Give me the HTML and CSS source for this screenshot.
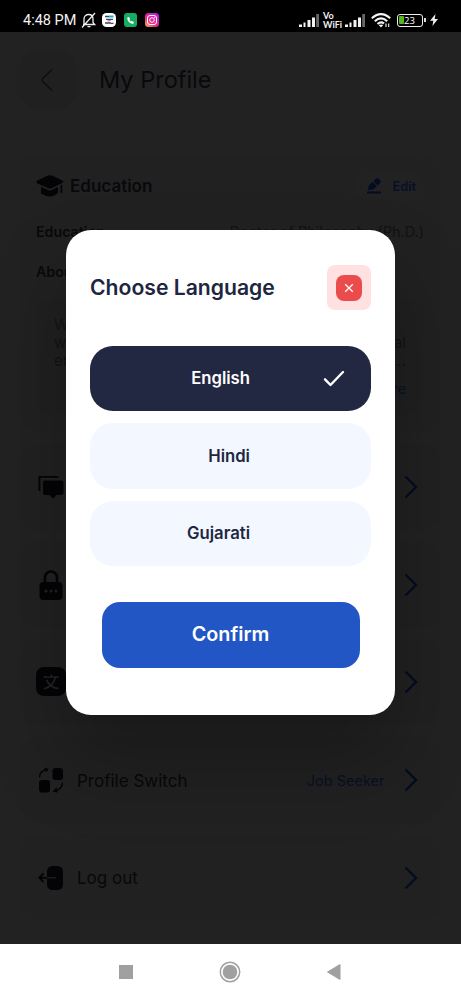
FILE: index.html
```html
<!DOCTYPE html>
<html lang="en">
<head>
<meta charset="utf-8">
<title>My Profile</title>
<link rel="stylesheet" href="styles.css">
</head>
<body>
<div class="phone">
  <header class="status">
    <span class="clock">4:48 PM</span>
    <svg class="bell" width="16" height="17" viewBox="0 0 16 17" fill="none" stroke="#eee" stroke-width="1.3"><path d="M3 12.5V7C3 4 5 2.5 7.700 2.500S12 4 12 7v3.500l1.700 2H2M6.500 14.700h3M1 15.500 14 1"/></svg>
    <svg class="app" width="14" height="14" viewBox="0 0 14 14"><rect width="14" height="14" rx="4.500" fill="#fff"/><path d="M3 3.500h4M4 6.300h7M3 10h6" stroke="#334869" stroke-width="1.300"/><path d="M7 3.500h4.500" stroke="#23a7df" stroke-width="2"/><path d="M5.500 8 8.500 7.500" stroke="#d44" stroke-width="1"/><path d="M9 10.300h2.500" stroke="#222"/></svg>
    <svg class="app" width="13" height="14" viewBox="0 0 13 14"><rect width="13" height="14" rx="3" fill="#15ad62"/><path d="M3.300 4.500 5 4l1 2-.7.900 1.600 1.700 1-.6 2 1-.5 1.800C6.500 11.200 3 8 3.300 4.500Z" fill="#fff"/></svg>
    <svg class="app" width="14" height="14" viewBox="0 0 14 14"><defs><linearGradient id="ig" x1="0" y1="1" x2=".8" y2="0"><stop offset="0" stop-color="#ffc145"/><stop offset=".4" stop-color="#f0287c"/><stop offset="1" stop-color="#b51de0"/></linearGradient></defs><rect width="14" height="14" rx="3.500" fill="url(#ig)"/><g fill="none" stroke="#fff" stroke-width="1"><rect x="2.500" y="2.500" width="9" height="9" rx="2.500"/><circle cx="7" cy="7" r="2.300"/></g><circle cx="9.700" cy="4.300" r=".6" fill="#fff"/></svg>
    <span class="grow"></span>
    <svg width="20" height="13" viewBox="0 0 20 13" fill="#f2f2f2"><path d="M0 10.500h3V13H0zM4.500 8.500h2V13h-2zM8.500 6h3v7h-3zM13 3.500h3V13h-3z"/><path d="M17.200 0H20v13h-2.800z" fill="#666"/></svg>
    <span class="vowifi"><span>Vo</span><span>WiFi</span></span>
    <svg class="sig2" width="20" height="13" viewBox="0 0 20 13" fill="#f2f2f2"><path d="M0 10.500h3V13H0zM4.500 8.500h2V13h-2zM8.500 6h3v7h-3zM13 3.500h3V13h-3z"/><path d="M17.200 0H20v13h-2.800z" fill="#666"/></svg>
    <svg class="wifi" width="20" height="15" viewBox="0 0 20 15" fill="none" stroke="#f5f5f5" stroke-width="2.100"><path d="M.8 5.200Q10-3 19.200 5.200M3.800 8.200Q10 2.700 16.200 8.200M6.500 11Q10 8 13 10.500"/><path d="m8.200 12 1.800 2.200L11.800 12Z" fill="#fff" stroke-width=".6"/><path d="M15 10.500v3.500M17.700 10.500V14" stroke-width="1.100"/></svg>
    <span class="battery"><span class="charge"></span><span class="pct">23</span></span><span class="cap"></span>
    <svg class="bolt" width="8" height="12" viewBox="0 0 8 12"><path d="M5.500 0 0 6.800h3.300L2.400 12 8 5H4.700Z" fill="#eee"/></svg>
  </header>

  <main class="page">
    <div class="topbar">
      <span class="back"><svg width="12" height="22" viewBox="0 0 12 22" fill="none" stroke="#0e0e10" stroke-width="1.500" stroke-linecap="round"><path d="M10.500 1 2 9.300Q.5 11 2 12.700L10.500 21"/></svg></span>
      <h1>My Profile</h1>
    </div>
    <div class="prev"></div>
    <section class="card education">
      <div class="cardhead">
        <svg width="28" height="22" viewBox="0 0 28 22" fill="#040407"><path d="M12 .5Q14 0 16 .5L26.500 5.500Q28 6.500 26.500 7.800L16 13Q14 14 12 13L1.500 8.500Q-.5 7 1.500 5.500ZM5 12l7.500 3.200q1.500.5 3 0L22 12v6Q18 21.500 14 21.500T5 18.500ZM24.500 10.500l1.700-.8V18h-1.700z"/></svg>
        <h2>Education</h2>
        <span class="edit"><svg width="14" height="16" viewBox="0 0 14 16" fill="#050b22"><path d="M0 13.600h14V15.500H0zM1 12l.8-4.500L5.700 4 10 8.200 6.200 11.500ZM6.500 3.200 8.500 1q1.900-1.600 4 .3t.3 4L10.800 7.500Z"/></svg>Edit</span>
      </div>
      <div class="field"><b>Education</b><span>Doctor of Philosophy (Ph.D.)</span></div>
      <div class="field about"><b>About</b></div>
      <div class="note">
        <div class="line"><span>W</span></div>
        <div class="line"><span>w</span><span>al</span></div>
        <div class="line"><span>en</span><span>...</span></div>
        <div class="more">More</div>
      </div>
    </section>
    <section class="card row">
      <svg class="ico" width="28" height="28" viewBox="0 0 28 28" fill="#040406"><path d="M1.500 3h20v1.800H3.400V18H1.500zM7 7.500h18l1.500 1.500v11.500L25 22h-5.500L16 25.500 12.500 22H7l-1-1.500V9z"/></svg>
      <svg class="chev" width="14" height="24" viewBox="0 0 14 24"><path d="m1.500 1.500 10.500 10.500-10.500 10.500"/></svg>
    </section>
    <section class="card row">
      <svg class="ico" width="28" height="32" viewBox="0 0 28 32"><path d="M8 14V8.500a6 6 0 0 1 12 0V14" fill="none" stroke="#040406" stroke-width="2.600"/><rect x="2.500" y="13" width="23" height="18" rx="4" fill="#040406"/><g fill="#222"><circle cx="9" cy="22" r="1.500"/><circle cx="14" cy="22" r="1.500"/><circle cx="19" cy="22" r="1.500"/></g></svg>
      <svg class="chev" width="14" height="24" viewBox="0 0 14 24"><path d="m1.500 1.500 10.500 10.500-10.500 10.500"/></svg>
    </section>
    <section class="card row">
      <svg class="ico wide" width="30" height="30" viewBox="0 0 30 30"><rect width="30" height="29" rx="8" fill="#040406"/><path d="M7.500 10h15.500M15 7.500l1 2.500M19.500 10q-2 9-11.500 12M10.500 13q4 8 12 8.500" fill="none" stroke="#222" stroke-width="1.700"/></svg>
      <svg class="chev" width="14" height="24" viewBox="0 0 14 24"><path d="m1.500 1.500 10.500 10.500-10.500 10.500"/></svg>
    </section>
    <section class="card row">
      <svg class="ico" width="28" height="28" viewBox="0 0 28 28" fill="#040406"><rect x="15.500" y="2" width="10.500" height="12" rx="3"/><rect x="2" y="14" width="11" height="12.500" rx="3"/><path d="M2.500 11.500Q2.500 5 9.500 3.500M7.500 2.700l3 .3-1.300 2.700M25.500 16.500q0 6.500-7.500 8.500M19.700 22.200 17 25.300l3.500.5" fill="none" stroke="#040406" stroke-width="1.400"/></svg>
      <span class="label">Profile Switch</span><span class="value">Job Seeker</span>
      <svg class="chev" width="14" height="24" viewBox="0 0 14 24"><path d="m1.500 1.500 10.500 10.500-10.500 10.500"/></svg>
    </section>
    <section class="card row">
      <svg class="ico" width="28" height="28" viewBox="0 0 28 28"><rect x="10" y="2" width="16" height="24" rx="5.500" fill="#040406"/><path d="M10 13.800H2.500M6.500 9.500 2.300 13.800 6.500 18" fill="none" stroke="#040406" stroke-width="1.800"/><path d="M10 13.800h9" stroke="#1c1c1c" stroke-width="1.500"/></svg>
      <span class="label">Log out</span>
      <svg class="chev" width="14" height="24" viewBox="0 0 14 24"><path d="m1.500 1.500 10.500 10.500-10.500 10.500"/></svg>
    </section>

    <div class="dialog">
      <div class="dialoghead">
        <h3>Choose Language</h3>
        <button class="close"><span><svg width="10" height="10" viewBox="0 0 10 10" stroke="#fff" stroke-width="1.300"><path d="m1.200 1.200 7.600 7.600m0-7.600L1.200 8.800"/></svg></span></button>
      </div>
      <div class="options">
        <div class="option selected"><span>English</span><svg width="22" height="17" viewBox="0 0 22 17" fill="none" stroke="#fff" stroke-width="2.400" stroke-linecap="round" stroke-linejoin="round"><path d="m2 9.300 5.500 5.700L20 2"/></svg></div>
        <div class="option"><span>Hindi</span></div>
        <div class="option"><span>Gujarati</span></div>
      </div>
      <button class="confirm">Confirm</button>
    </div>
  </main>

  <nav class="nav">
    <svg width="14" height="14"><rect width="14" height="14" fill="#a0a0a0"/></svg>
    <svg width="22" height="22" viewBox="0 0 22 22"><circle cx="11" cy="11" r="9.700" fill="none" stroke="#a0a0a0" stroke-width="1.500"/><circle cx="11" cy="11" r="7.300" fill="#a0a0a0"/></svg>
    <svg width="14" height="16" viewBox="0 0 14 16"><path d="M13 .5V15.500L.5 8Z" fill="#a0a0a0" stroke="#a0a0a0" stroke-linejoin="round"/></svg>
  </nav>
</div>
</body>
</html>
```
FILE: styles.css
```css
* { box-sizing: border-box; }
body { margin: 0; font-family: Inter, "Liberation Sans", sans-serif; }
h1, h2, h3 { margin: 0; }
button { border: 0; padding: 0; font-family: inherit; }
svg { display: block; flex: none; }
.phone { width: 461px; height: 1000px; display: flex; flex-direction: column; overflow: hidden; }

.status { height: 32px; flex: none; background: #000; color: #f2f2f2; display: flex; align-items: center; padding: 8px 23px 0 23px; }
.clock { font: 14.5px/20px Roboto, sans-serif; width: 58px; white-space: nowrap; padding-top: 1px; }
.bell { margin-right: 5px; }
.app { margin-right: 8px; }
.grow { flex: 1; }
.vowifi { display: flex; flex-direction: column; font: 700 9px/9px Lato, sans-serif; width: 22px; margin-left: 4px; }
.wifi { margin-left: 6px; }
.battery { width: 26px; height: 13px; border: 1.5px solid #eee; border-radius: 3px; margin-left: 6px; padding: 1px; display: flex; align-items: center; }
.charge { width: 5px; height: 8px; background: #58b420; border-radius: 1px; }
.pct { font: 9.5px/9px "Open Sans", sans-serif; color: #fff; }
.cap { width: 2px; height: 4px; background: #ddd; margin-left: 1px; }
.bolt { margin-left: 4px; }

.page { height: 912px; flex: none; position: relative; background: #222; padding: 19px 20px 0 20px; overflow: hidden; }
.topbar { display: flex; align-items: center; height: 57px; gap: 23px; }
.back { width: 56px; height: 57px; border-radius: 17px; background: #202020; display: flex; align-items: center; justify-content: center; padding-right: 2px; }
h1 { font-size: 23.5px; font-weight: 400; color: #08090d; padding-bottom: 1px; }
.prev { height: 23px; margin-top: 12px; border-radius: 0 0 20px 20px; background: linear-gradient(#222, #212121); }
.card { background: #212121; border-radius: 20px; }
.education { height: 278px; margin-top: 11px; padding: 17px 17px 0 16px; }
.cardhead { display: flex; align-items: center; height: 30px; }
h2 { font-size: 17px; font-weight: 600; color: #08090c; margin-left: 6px; flex: 1; }
.edit { display: flex; align-items: center; gap: 12px; height: 28px; padding: 0 8px 0 12px; font-size: 12.7px; font-weight: 600; color: #071028; background: #222; border-radius: 14px; }
.field { display: flex; justify-content: space-between; font-size: 14.2px; line-height: 20px; margin-top: 21px; color: #08090c; }
.field b { font-weight: 600; }
.about { margin-top: 20px; }
.field span { color: #121212; font-size: 14.5px; }
.note { margin-top: 17px; height: 115px; padding: 17px 18px 0 18px; border-radius: 18px; background: #202020; font-size: 15px; line-height: 18px; color: #131314; }
.line { display: flex; justify-content: space-between; }
.more { text-align: right; line-height: 20px; margin-top: 9px; color: #081126; font-size: 14px; }
.row { height: 86px; margin-top: 11.800px; display: flex; align-items: center; padding: 0 23.500px 0 17px; }
.ico { margin-right: 12px; }
.wide { margin: 0 11px 0 -1px; }
.label { font-size: 17px; color: #07080a; padding-top: 1px; }
.value { margin-left: auto; font-size: 14.5px; color: #081023; }
.chev { margin-left: auto; fill: none; stroke: #050c20; stroke-width: 2.400; }
.value + .chev { margin-left: 19px; }

/* Modal over the dimmed profile page */
.dialog { position: absolute; left: 66px; top: 198px; width: 329px; height: 485px; background: #fff; border-radius: 25px; padding: 35px 24px 0; box-shadow: 0 45px 80px rgba(0, 0, 0, .25); }
.dialoghead { display: flex; align-items: center; justify-content: space-between; }
h3 { font-size: 21.150px; font-weight: 600; color: #202640; white-space: nowrap; padding-bottom: 1px; }
.close { width: 44px; height: 45px; background: #ffe1e1; border-radius: 8px; display: flex; align-items: center; justify-content: center; }
.close span { width: 26px; height: 26px; border-radius: 8px; background: #eb4b4b; display: flex; align-items: center; justify-content: center; }
.options { margin-top: 35.500px; display: grid; gap: 12px; }
.option { height: 65.500px; border-radius: 23px; background: #f3f7ff; color: #202640; font-size: 16.700px; font-weight: 600; display: flex; align-items: center; justify-content: space-between; padding-right: 26px; }
.option span { width: 160px; text-align: right; }
.option.selected { background: #222742; color: #fff; }
.confirm { display: block; width: 258px; height: 66px; margin: 35.500px auto 0 11.500px; border-radius: 18px; background: #2356c5; color: #fff; font-size: 19.800px; font-weight: 600; padding-bottom: 2px; }

.nav { flex: 1; background: #fff; display: flex; justify-content: space-between; align-items: center; padding: 0 120px 0 119px; }
```
